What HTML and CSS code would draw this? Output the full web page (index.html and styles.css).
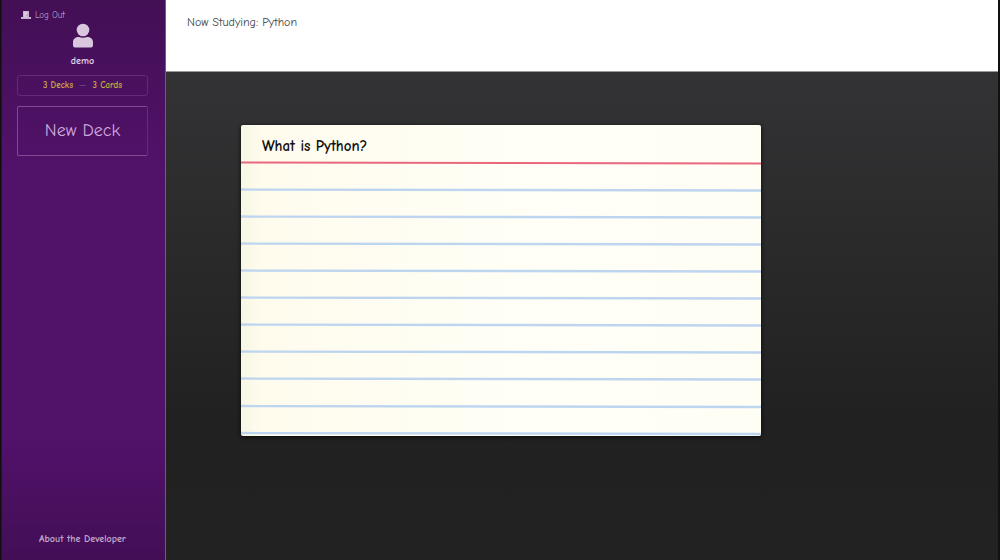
FILE: index.html
```html
<!DOCTYPE html>
<html lang="en">
<head>
<meta charset="utf-8">
<meta name="viewport" content="width=device-width, initial-scale=1">
<title>Flashcards</title>
<link rel="stylesheet" href="styles.css">
</head>
<body>
<div class="app">
  <aside class="sidebar">
    <button class="logout" type="button">
      <svg class="door" viewBox="0 0 10 8" aria-hidden="true"><path d="M2 0h6v6h2v2H0V6h2z" fill="#c9b4d2"/><path d="M3 1h3v5H3z" fill="#d9cbdf"/><circle cx="6" cy="4" r=".6" fill="#8d68a0"/></svg>
      <span>Log Out</span>
    </button>
    <div class="profile">
      <svg class="avatar" viewBox="0 0 22 26" aria-hidden="true"><circle cx="11" cy="7" r="6.3" fill="#d8c7df"/><path d="M1 22v-3c0-3 2.500-5 6-5 2.600 1.100 5.400 1.100 8 0 3.500 0 6 2 6 5v3c0 1.500-.6 2.500-2 2.500H3c-1.400 0-2-1-2-2.500z" fill="#d8c7df"/></svg>
      <span class="username">demo</span>
    </div>
    <div class="stats"><span>3 Decks</span><span class="dash">—</span><span>3 Cards</span></div>
    <button class="new-deck" type="button">New Deck</button>
    <a class="about" href="#">About the Developer</a>
  </aside>
  <main class="study">
    <header class="topbar"><h1 class="title">Now Studying: Python</h1></header>
    <section class="stage">
      <article class="card">
        <svg class="rules" viewBox="0 0 520 311" preserveAspectRatio="none" aria-hidden="true">
          <path d="M0 37.500L520 38.500" stroke="#e8687e" stroke-width="2"/>
          <path d="M0 64.500L520 65.500M0 91.500L520 92.500M0 118.500L520 119.500M0 145.500L520 146.500M0 172.500L520 173.500M0 199.500L520 200.500M0 226.500L520 227.500M0 253.500L520 254.500M0 281L520 282M0 308L520 309" stroke="#bed5ef" stroke-width="2.300"/>
        </svg>
        <h2 class="question">What is Python?</h2>
      </article>
    </section>
  </main>
</div>
</body>
</html>
```
FILE: styles.css
```css
* { box-sizing: border-box; }

body {
  margin: 0;
  background: #111;
  font-family: "Comic Sans MS", "Comic Neue", "Open Sans", sans-serif;
}

.app {
  display: flex;
  min-height: 100vh;
  padding: 0 2px 0 1px;
}

.sidebar {
  display: flex;
  flex-direction: column;
  flex: 0 0 165px;
  padding: 8px 17px 13px 15px;
  background: linear-gradient(#430f55, #511269 30%, #51126a 78%, #430e56);
  border-left: 1px solid #2c0b38;
  border-right: 1px solid #715d7b;
}

.logout {
  display: flex;
  align-items: center;
  align-self: flex-start;
  gap: 4px;
  padding: 0 0 0 4px;
  border: 0;
  background: none;
  color: #b698c0;
  font: 9px/14px "Comic Sans MS", "Comic Neue", "DejaVu Sans", sans-serif;
}

.door { width: 10px; height: 8px; }

.profile {
  display: flex;
  flex-direction: column;
  align-items: center;
}

.avatar { width: 22px; height: 26px; margin-top: 1px; }

.username {
  margin-top: 4px;
  color: #e0d2e6;
  font-size: 10px;
  font-weight: 600;
  line-height: 16px;
}

.stats {
  display: flex;
  justify-content: center;
  gap: 6px;
  margin-top: 6px;
  border: 1px solid #642a78;
  border-radius: 3px;
  color: #c6a840;
  font: bold 9px/19px "Comic Sans MS", "Comic Neue", "DejaVu Sans", sans-serif;
}

.dash { color: #85609a; font-weight: 400; }

.new-deck {
  margin-top: 10px;
  padding: 0;
  border: 1px solid #7f4994;
  border-right-color: #642d79;
  border-radius: 2px;
  background: none;
  color: #d0a9dd;
  font: 18px/48px "Comic Sans MS", "Comic Neue", "Open Sans", sans-serif;
}

.about {
  margin-top: auto;
  color: #c2a9cc;
  font-size: 10px;
  font-weight: 600;
  line-height: 16px;
  text-align: center;
  text-decoration: none;
}

.study {
  display: flex;
  flex-direction: column;
  flex: 1;
  background: linear-gradient(#363638, #333335 13%, #212121 75%, #222);
}

.topbar {
  min-height: 72px;
  padding: 14px 21px;
  border-bottom: 1px solid #999;
  background: #fff;
}

.title {
  margin: 0;
  color: #444;
  font-size: 12px;
  font-weight: 400;
  line-height: 16px;
}

.stage {
  display: flex;
  flex: 1;
  align-items: flex-start;
  padding: 53px 9% 53px;
}

.card {
  position: relative;
  flex: 0 1 520px;
  min-height: 311px;
  padding: 10px 21px;
  overflow: hidden;
  border-radius: 2px;
  background: linear-gradient(90deg, #f6f7e5, #fffcee 4%, #fffff7 60%, #fffef5);
  box-shadow: 0 1px 4px #080808;
}

.rules {
  position: absolute;
  inset: 0;
  width: 100%;
  height: 100%;
}

.question {
  position: relative;
  margin: 0;
  color: #111;
  font-size: 15px;
  font-weight: 600;
  line-height: 22px;
}
```
